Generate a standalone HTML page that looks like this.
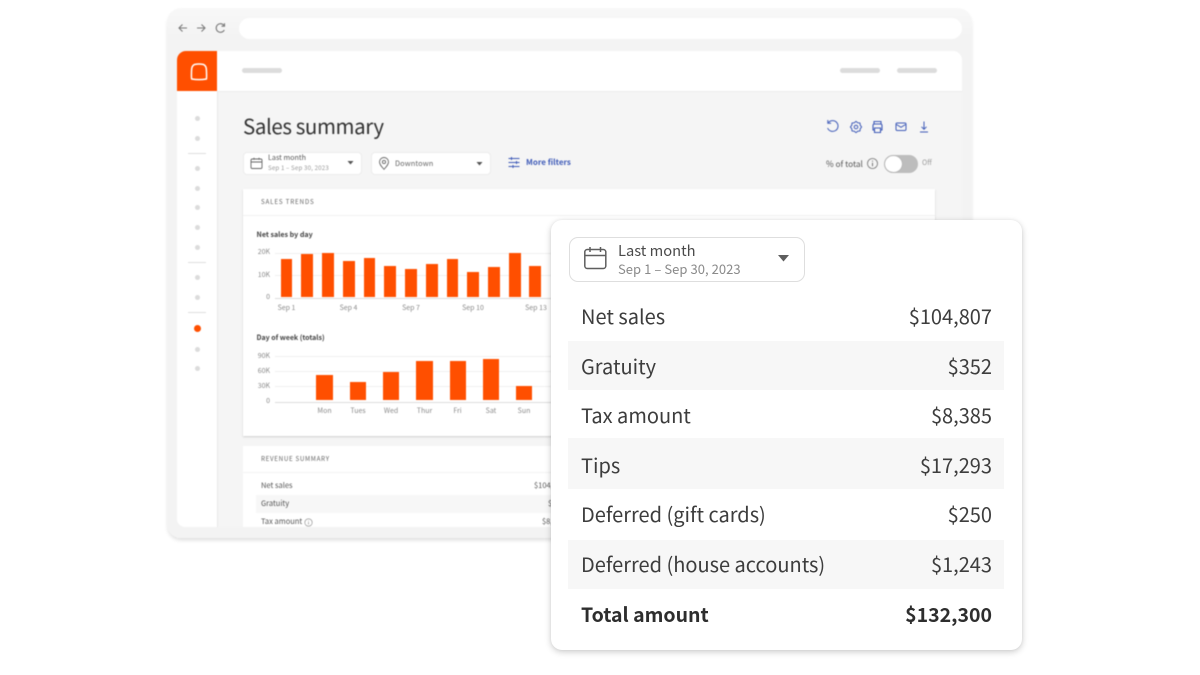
<!DOCTYPE html>
<html>
<head>
<meta charset="utf-8">
<style>
html,body{margin:0;padding:0;background:#fff}
#p{position:relative;width:1200px;height:675px;overflow:hidden;background:#fff;font-family:"Noto Sans CJK JP","Liberation Sans",sans-serif}
.a{position:absolute}
.t{position:absolute;white-space:nowrap;line-height:1}
#mock{position:absolute;left:0;top:0;width:1200px;height:675px;filter:blur(.4px)}
.frame{left:167px;top:8px;width:805px;height:530px;background:linear-gradient(#f8f8f8 0,#f3f3f3 30px);border-radius:14px;box-shadow:0 3px 4px -1px rgba(0,0,0,.14)}
.addr{left:239px;top:18px;width:723px;height:21px;background:#fff;border-radius:11px}
.app{left:177px;top:51px;width:785px;height:476px;background:#f5f5f5;border-radius:9px;overflow:hidden}
.hdr{left:217px;top:51px;width:745px;height:40px;background:#fff;border-bottom:1px solid #ececec;border-top-right-radius:9px;box-sizing:content-box}
.logo{left:177px;top:51px;width:40px;height:40px;background:#ff4f00;border-top-left-radius:9px}
.side{left:177px;top:91px;width:40px;height:436px;background:#fff;border-right:1px solid #e8e8e8;border-bottom-left-radius:8px}
.pill{background:#dcdcdc;height:5px;border-radius:3px}
.dot{position:absolute;left:194.5px;width:5px;height:5px;border-radius:50%;background:#dcdcdc}
.ln{position:absolute;left:188px;width:18px;height:1px;background:#dedede}
.box{background:#fff;border:1px solid #ececec;border-radius:4px;box-sizing:border-box}
.card{background:#fff;box-shadow:0 1px 2px rgba(0,0,0,.16)}
.g{position:absolute;height:1px;background:#efefef}
.b{position:absolute;background:#ff4f00}
.l{position:absolute;white-space:nowrap;line-height:1;font-size:7px;color:#8a8a8a;transform:translateX(-50%)}
.y{position:absolute;white-space:nowrap;line-height:1;font-size:7px;color:#8a8a8a;text-align:right;width:30px;left:240px}
.pop{left:551px;top:220px;width:471px;height:430px;background:#fff;border-radius:11px;box-shadow:0 2px 7px rgba(0,0,0,.2),0 0 3px rgba(0,0,0,.05)}
.st{position:absolute;left:568px;width:436px;background:#f7f7f7}
.r{position:absolute;left:581px;width:411px;display:flex;justify-content:space-between;font-size:20px;line-height:30px;height:30px;color:#3d3d3d;filter:blur(.3px)}
</style>
</head>
<body>
<div id="p">
<div id="mock">
  <div class="a frame"></div>
  <div class="a addr"></div>
  <svg class="a" style="left:175px;top:20px" width="60" height="16" viewBox="0 0 60 16" fill="none" stroke="#7a7a7a" stroke-width="1.1">
    <path d="M12 8H4M7.500 4.500 4 8l3.500 3.500"/>
    <path d="M22 8h8M26.500 4.500 30 8l-3.500 3.500"/>
    <path d="M49 5.500A4.300 4.300 0 1 0 49.300 10"/><path d="M49.500 3.200v3h-3"/>
  </svg>
  <div class="a app"></div>
  <div class="a hdr"></div>
  <div class="a side"></div>
  <div class="a logo"></div>
  <svg class="a" style="left:189px;top:62px" width="20" height="20" viewBox="0 0 20 20" fill="none" stroke="#fff" stroke-width="1.500">
    <path d="M5.500 2.500C8 1.900 12 1.900 14.500 2.500 16.500 3.200 17.500 6 17.500 9.500 17.500 12 17.800 15 17.400 17 13 17.800 7 17.800 2.700 17 2.200 15 2.500 12 2.500 9.500 2.500 6 3.500 3.200 5.500 2.500Z"/>
  </svg>
  <div class="a pill" style="left:242px;top:68px;width:40px"></div>
  <div class="a pill" style="left:840px;top:68px;width:40px"></div>
  <div class="a pill" style="left:897px;top:68px;width:40px"></div>

  <div class="dot" style="top:116px"></div><div class="dot" style="top:136px"></div>
  <div class="ln" style="top:153px"></div>
  <div class="dot" style="top:166px"></div><div class="dot" style="top:185.500px"></div><div class="dot" style="top:205px"></div><div class="dot" style="top:225px"></div><div class="dot" style="top:244.500px"></div>
  <div class="ln" style="top:262px"></div>
  <div class="dot" style="top:274.500px"></div><div class="dot" style="top:294.500px"></div>
  <div class="ln" style="top:312px"></div>
  <div class="dot" style="top:324.500px;left:193.500px;width:7px;height:7px;background:#ff4f00"></div>
  <div class="dot" style="top:346.500px"></div><div class="dot" style="top:366px"></div>

  <div class="t" style="left:243px;top:113px;font-size:20.500px;line-height:24px;letter-spacing:-.4px;color:#333">Sales summary</div>

  <div class="a box" style="left:243px;top:152px;width:119px;height:23px"></div>
  <svg class="a" style="left:250px;top:157px" width="13" height="13" viewBox="0 0 13 13" fill="none" stroke="#666" stroke-width=".9"><rect x="1" y="2" width="11" height="9.500" rx="1.300"/><path d="M1 5h11M4 .8v2M9 .8v2"/></svg>
  <div class="t" style="left:268px;top:155px;font-size:7.200px;color:#555">Last month</div>
  <div class="t" style="left:268px;top:165px;font-size:6.200px;color:#999;letter-spacing:.15px">Sep 1 – Sep 30, 2023</div>
  <svg class="a" style="left:347px;top:161px" width="7" height="4"><path d="M.5 0h6L3.500 3.500z" fill="#555"/></svg>

  <div class="a box" style="left:371px;top:152px;width:120px;height:23px"></div>
  <svg class="a" style="left:378px;top:157px" width="12" height="13" viewBox="0 0 12 13" fill="none" stroke="#666" stroke-width=".9"><path d="M6 12.300C3.500 9.500 1.500 7.500 1.500 5a4.500 4.500 0 0 1 9 0C10.500 7.500 8.500 9.500 6 12.300Z"/><circle cx="6" cy="5" r="1.600"/></svg>
  <div class="t" style="left:395px;top:159.500px;font-size:7.400px;color:#666;letter-spacing:.1px">Downtown</div>
  <svg class="a" style="left:476px;top:161.500px" width="7" height="4"><path d="M.5 0h6L3.500 3.500z" fill="#555"/></svg>

  <svg class="a" style="left:508px;top:156px" width="12" height="13" viewBox="0 0 12 13" fill="none" stroke="#3f5bb8" stroke-width="1"><path d="M.5 2.500h11M.5 6.500h11M.5 10.500h11"/><path d="M3.500 1v3M8.500 5v3M5 9v3"/></svg>
  <div class="t" style="left:526px;top:158.500px;font-size:8px;font-weight:700;color:#3f5bb8">More filters</div>

  <svg class="a" style="left:825px;top:119px" width="106" height="16" viewBox="0 0 106 16" fill="none" stroke="#3f5bb8" stroke-width="1">
    <path d="M3.500 3.500A5.400 5.400 0 1 1 2.600 9"/><path d="M2.800 1v3.300h3.300"/>
    <circle cx="31" cy="8" r="1.800"/><path d="M36.600 8 35.250 9.760 34.960 11.960 32.760 12.250 31 13.600 29.240 12.250 27.040 11.960 26.750 9.760 25.400 8 26.750 6.240 27.040 4.040 29.240 3.750 31 2.400 32.760 3.750 34.960 4.040 35.250 6.240Z"/>
    <path d="M49 5V2.500h7V5M49.500 11H48V6.500a1.500 1.500 0 0 1 1.500-1.500h6A1.500 1.500 0 0 1 57 6.500V11h-1.500M49.500 9h6v4.500h-6z" stroke-width="1.100"/>
    <rect x="71" y="4" width="10" height="7.500" rx="1.200"/><path d="M71.500 5.500 76 8.300l4.500-2.800"/>
    <path d="M99 2.500v7.500M96.500 7.800 99 10.300l2.500-2.500M95 13h8"/>
  </svg>

  <div class="t" style="left:826px;top:159.500px;font-size:8.300px;color:#555">% of total</div>
  <svg class="a" style="left:866px;top:157px" width="13" height="13" viewBox="0 0 13 13" fill="none" stroke="#777" stroke-width=".8"><circle cx="6.500" cy="6.500" r="5"/><path d="M6.500 5.700v3.600M6.500 3.600v1" stroke-width="1"/></svg>
  <div class="a" style="left:884px;top:154.500px;width:34px;height:18.500px;border-radius:10px;background:#bdbdbd"></div>
  <div class="a" style="left:885px;top:155.500px;width:16.500px;height:16.500px;border-radius:50%;background:#fff;box-shadow:0 0 1px rgba(0,0,0,.3)"></div>
  <div class="t" style="left:922px;top:159.500px;font-size:7px;color:#999">Off</div>

  <div class="a card" style="left:243px;top:189px;width:692px;height:247px"></div>
  <div class="t" style="left:261px;top:199px;font-size:6.300px;letter-spacing:.8px;color:#666">SALES TRENDS</div>
  <div class="g" style="left:243px;top:215px;width:692px;background:#f1f1f1"></div>

  <div class="t" style="left:256.500px;top:232px;font-size:7.100px;font-weight:700;color:#444">Net sales by day</div>
  <div class="y" style="top:249px">20K</div><div class="y" style="top:271.500px">10K</div><div class="y" style="top:294px">0</div>
  <div class="g" style="left:275px;top:253px;width:276px"></div>
  <div class="g" style="left:275px;top:275px;width:276px"></div>
  <div class="g" style="left:275px;top:298px;width:276px;background:#dcdcdc"></div>
  <div class="b" style="left:280.700px;top:259px;width:11.700px;height:37.700px"></div>
  <div class="b" style="left:301.300px;top:254.300px;width:11.700px;height:42.400px"></div>
  <div class="b" style="left:322.300px;top:253px;width:11.700px;height:43.700px"></div>
  <div class="b" style="left:343px;top:260.700px;width:11.700px;height:36px"></div>
  <div class="b" style="left:363.700px;top:257.700px;width:11.700px;height:39px"></div>
  <div class="b" style="left:384.300px;top:266.300px;width:11.700px;height:30.400px"></div>
  <div class="b" style="left:405.300px;top:268.700px;width:11.700px;height:28px"></div>
  <div class="b" style="left:426px;top:263.700px;width:11.700px;height:33px"></div>
  <div class="b" style="left:446.700px;top:259.300px;width:11.700px;height:37.400px"></div>
  <div class="b" style="left:467.300px;top:272.300px;width:11.700px;height:24.400px"></div>
  <div class="b" style="left:488px;top:267.300px;width:12px;height:29.400px"></div>
  <div class="b" style="left:509px;top:253px;width:11.700px;height:43.700px"></div>
  <div class="b" style="left:529.300px;top:266.300px;width:12px;height:30.400px"></div>
  <div class="l" style="left:286.500px;top:304.500px">Sep 1</div>
  <div class="l" style="left:348.500px;top:304.500px">Sep 4</div>
  <div class="l" style="left:411px;top:304.500px">Sep 7</div>
  <div class="l" style="left:473px;top:304.500px">Sep 10</div>
  <div class="l" style="left:536px;top:304.500px">Sep 13</div>

  <div class="t" style="left:256.500px;top:335px;font-size:7px;font-weight:700;color:#444">Day of week (totals)</div>
  <div class="y" style="top:352.500px">90K</div><div class="y" style="top:367.500px">60K</div><div class="y" style="top:382.500px">30K</div><div class="y" style="top:397.500px">0</div>
  <div class="g" style="left:275px;top:356px;width:276px"></div>
  <div class="g" style="left:275px;top:371px;width:276px"></div>
  <div class="g" style="left:275px;top:386px;width:276px"></div>
  <div class="g" style="left:275px;top:401.500px;width:276px;background:#dcdcdc"></div>
  <div class="b" style="left:316.300px;top:375px;width:16.400px;height:25.300px"></div>
  <div class="b" style="left:349.700px;top:382.300px;width:16.300px;height:18px"></div>
  <div class="b" style="left:383px;top:372px;width:16.300px;height:28.300px"></div>
  <div class="b" style="left:416.300px;top:360.700px;width:16.400px;height:39.600px"></div>
  <div class="b" style="left:449.700px;top:360.700px;width:16.300px;height:39.600px"></div>
  <div class="b" style="left:482.700px;top:359px;width:16.300px;height:41.300px"></div>
  <div class="b" style="left:516px;top:385.700px;width:16.300px;height:14.600px"></div>
  <div class="l" style="left:324.500px;top:408px">Mon</div>
  <div class="l" style="left:358px;top:408px">Tues</div>
  <div class="l" style="left:391px;top:408px">Wed</div>
  <div class="l" style="left:424.500px;top:408px">Thur</div>
  <div class="l" style="left:457.500px;top:408px">Fri</div>
  <div class="l" style="left:491px;top:408px">Sat</div>
  <div class="l" style="left:524px;top:408px">Sun</div>

  <div class="a" style="left:243px;top:446px;width:692px;height:81px;background:#fff"></div>
  <div class="t" style="left:261px;top:455.500px;font-size:6.300px;letter-spacing:.65px;color:#666">REVENUE SUMMARY</div>
  <div class="g" style="left:243px;top:472px;width:692px;background:#f3f3f3"></div>
  <div class="a" style="left:256px;top:495px;width:679px;height:18px;background:#f7f7f7"></div>
  <div class="t" style="left:261px;top:481.500px;font-size:7.500px;color:#555">Net sales</div>
  <div class="t" style="left:261px;top:499.500px;font-size:7.500px;color:#555">Gratuity</div>
  <div class="t" style="left:261px;top:517.500px;font-size:7.500px;color:#555">Tax amount</div>
  <svg class="a" style="left:304px;top:518px" width="9" height="9" viewBox="0 0 9 9" fill="none" stroke="#888" stroke-width=".6"><circle cx="4.500" cy="4.500" r="3.700"/><path d="M4.500 4v2.500M4.500 2.500v.7"/></svg>
  <div class="t" style="left:534px;top:481.500px;font-size:7.500px;color:#555">$104,807</div>
  <div class="t" style="left:548px;top:499.500px;font-size:7.500px;color:#555">$352</div>
  <div class="t" style="left:542px;top:517.500px;font-size:7.500px;color:#555">$8,385</div>
  <div class="a" style="left:177px;top:527px;width:785px;height:11px;background:#f3f3f3"></div>
</div>

<div class="a pop"></div>
<div class="a" style="left:569px;top:237px;width:236px;height:45px;box-sizing:border-box;border:1px solid #dedede;border-radius:9px;background:#fff"></div>
<svg class="a" style="left:583px;top:246px" width="25" height="25" viewBox="0 0 25 25" fill="none" stroke="#5e5e5e" stroke-width="1.500"><rect x="1.800" y="3.500" width="21" height="19" rx="2.500"/><path d="M1.800 9.500h21M7 1v5M17.500 1v5"/></svg>
<div class="t" style="left:618px;top:242px;font-size:14.700px;line-height:17px;color:#4a4a4a">Last month</div>
<div class="t" style="left:618px;top:261px;font-size:13px;line-height:16px;color:#8a8a8a;letter-spacing:.05px">Sep 1 – Sep 30, 2023</div>
<svg class="a" style="left:778px;top:255px" width="11" height="7"><path d="M0 0h11L5.500 6.500z" fill="#5e5e5e"/></svg>

<div class="st" style="top:341px;height:49px"></div>
<div class="st" style="top:437.500px;height:51.500px"></div>
<div class="st" style="top:540px;height:49px"></div>
<div class="r" style="top:301px"><span>Net sales</span><span>$104,807</span></div>
<div class="r" style="top:351px"><span>Gratuity</span><span>$352</span></div>
<div class="r" style="top:400px"><span>Tax amount</span><span>$8,385</span></div>
<div class="r" style="top:450px"><span>Tips</span><span>$17,293</span></div>
<div class="r" style="top:499px"><span>Deferred (gift cards)</span><span>$250</span></div>
<div class="r" style="top:549px"><span>Deferred (house accounts)</span><span>$1,243</span></div>
<div class="r" style="top:599px;font-weight:700;font-size:19.500px;color:#2e2e2e"><span>Total amount</span><span>$132,300</span></div>
</div>
</body>
</html>
